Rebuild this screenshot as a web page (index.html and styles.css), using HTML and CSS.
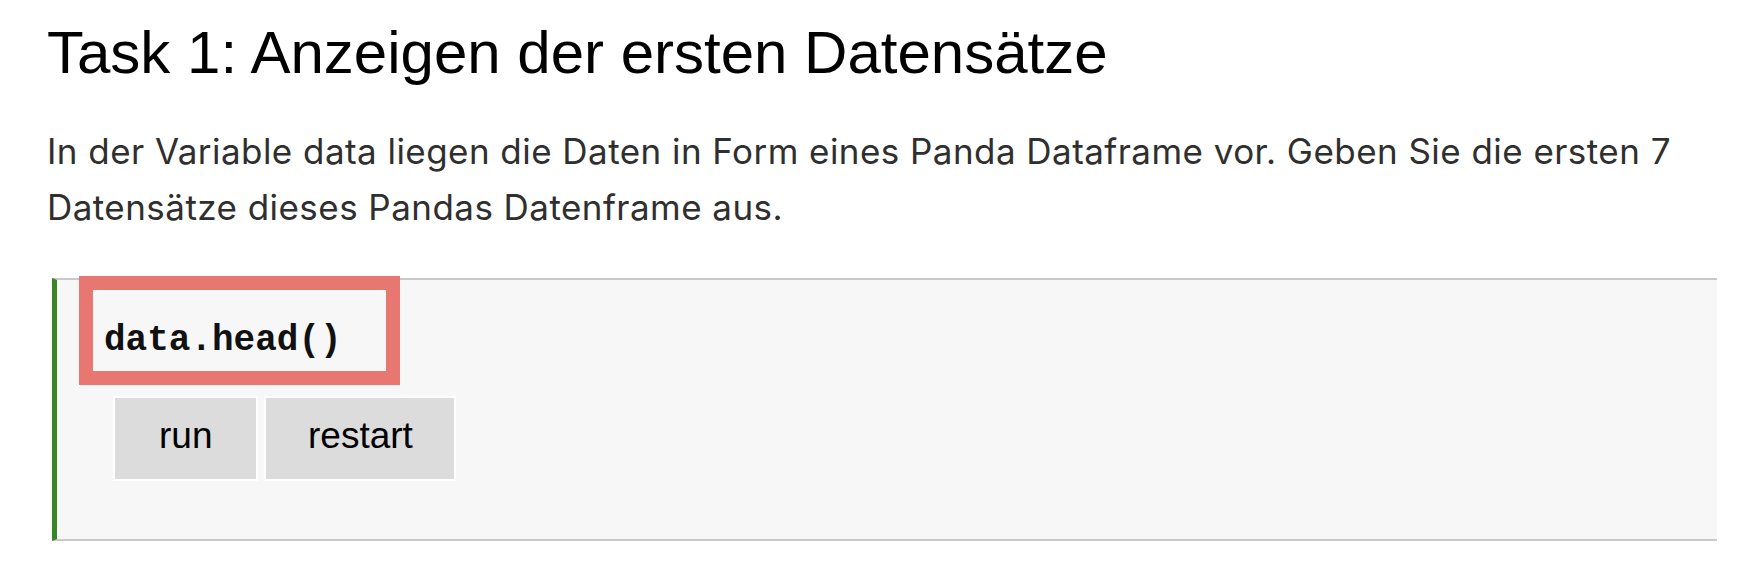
FILE: index.html
```html
<!DOCTYPE html>
<html lang="de">
<head>
<meta charset="utf-8">
<title>Task 1</title>
<link rel="stylesheet" href="styles.css">
</head>
<body>
<main class="page">
  <h1 class="title">Task 1: Anzeigen der ersten Datensätze</h1>
  <p class="desc">In der Variable data liegen die Daten in Form eines Panda Dataframe vor. Geben Sie die ersten 7 Datensätze dieses Pandas Datenframe aus.</p>
  <div class="cell">
    <div class="code"><code>data.head()</code></div>
    <div class="actions">
      <button class="btn btn-run" type="button">run</button>
      <button class="btn btn-restart" type="button">restart</button>
    </div>
    <div class="highlight"></div>
  </div>
</main>
</body>
</html>
```
FILE: styles.css
```css
html, body {
  margin: 0;
  padding: 0;
  background: #ffffff;
}

.page {
  width: 1670px;
  padding: 18px 0 0 47px;
}

.title {
  margin: 0;
  font-family: "Liberation Sans", Arial, sans-serif;
  font-weight: 400;
  font-size: 60px;
  line-height: 70px;
  color: #000000;
}

.desc {
  margin: 35px 0 0 0;
  font-family: Inter, "Liberation Sans", sans-serif;
  font-size: 35px;
  letter-spacing: 0.45px;
  line-height: 56px;
  color: #2f2f2f;
}

.cell {
  position: relative;
  margin: 43px 0 0 5px;
  background: #f7f7f7;
  border-top: 2px solid #c9c9c9;
  border-bottom: 2px solid #c9c9c9;
  border-left: 5px solid #3a8326;
  padding: 41px 0 58px 0;
}

.code {
  padding-left: 47px;
  font-family: "Liberation Mono", "Courier New", monospace;
  font-weight: 700;
  font-size: 36px;
  line-height: 40px;
  color: #111111;
}

.code code {
  font: inherit;
}

.actions {
  display: flex;
  gap: 6px;
  margin: 35px 0 0 56px;
}

.btn {
  margin: 0;
  border: 2px solid #ffffff;
  background: #dcdcdc;
  font-family: "Liberation Sans", Arial, sans-serif;
  font-size: 37px;
  line-height: 76px;
  padding: 0 42.5px 5px;
  color: #000000;
}

.btn-run {
  padding-left: 44px;
  padding-right: 44px;
}

.btn-restart {
  padding-left: 41.5px;
  padding-right: 41.5px;
}

.highlight {
  position: absolute;
  left: 22px;
  top: -4px;
  width: 321px;
  height: 109px;
  box-sizing: border-box;
  border: 14px solid #e87771;
}
```
